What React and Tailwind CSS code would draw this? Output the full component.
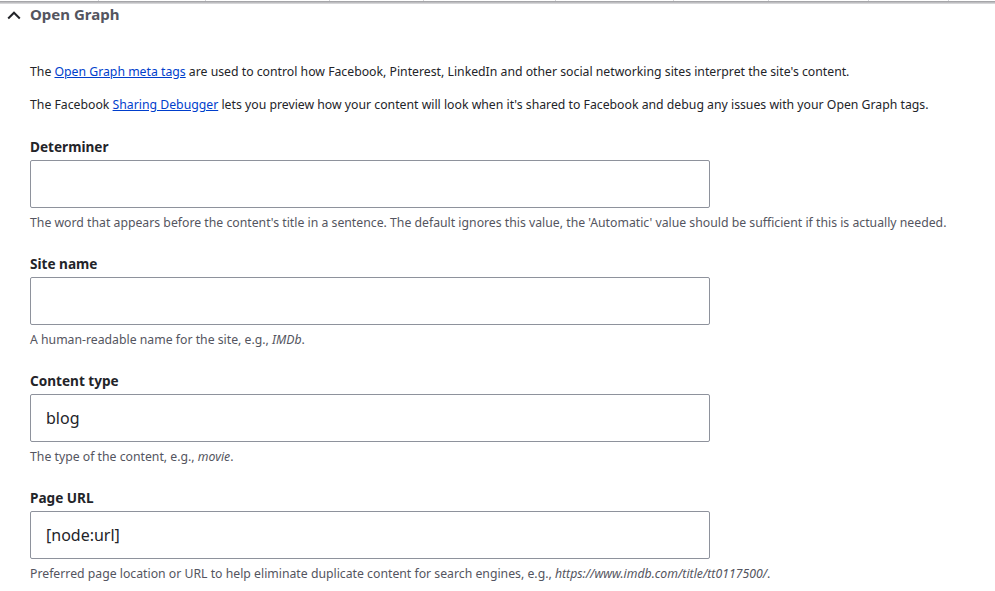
const fields = [
  {
    label: 'Determiner',
    value: '',
    help: (
      <>The word that appears before the content's title in a sentence. The default ignores this value, the 'Automatic' value should be sufficient if this is actually needed.</>
    ),
  },
  {
    label: 'Site name',
    value: '',
    help: (
      <>A human-readable name for the site, e.g., <em>IMDb</em>.</>
    ),
  },
  {
    label: 'Content type',
    value: 'blog',
    help: (
      <>The type of the content, e.g., <em>movie</em>.</>
    ),
  },
  {
    label: 'Page URL',
    value: '[node:url]',
    help: (
      <>Preferred page location or URL to help eliminate duplicate content for search engines, e.g., <em>https://www.imdb.com/title/tt0117500/</em>.</>
    ),
  },
];

const dividers = [98, 205, 329, 423, 555, 673, 768, 868, 948];

const Field = ({ label, value, help }) => (
  <div className="flex flex-col">
    <label className="text-[13.6px] font-bold leading-[18px] text-[#232429]">{label}</label>
    <input
      readOnly
      value={value}
      className="mt-[4px] h-[48px] w-[680px] rounded-[2px] border border-[#8e929c] bg-white px-[15px] text-[16px] text-[#232429] outline-none"
    />
    <p className="mt-[7px] text-[12.25px] leading-[16px] text-[#545560]">{help}</p>
  </div>
);

export default function App() {
  return (
    <div className="h-[591px] w-[995px] overflow-hidden bg-white font-['Noto_Sans',sans-serif]">
      <div className="relative h-[1px] bg-white">
        {dividers.map((x) => (
          <span key={x} className="absolute top-0 h-[1px] w-[1px] bg-[#d4d4d8]" style={{ left: x }} />
        ))}
      </div>
      <div className="h-[3px] bg-gradient-to-b from-[#9a9a9e] to-[#e2e2e4]" />

      <div className="flex items-center gap-[9px] pl-[7px] pt-[1px]">
        <svg width="14" height="14" viewBox="0 0 14 14" fill="none">
          <path d="M1.2 10.5 L7 4.7 L12.8 10.5" stroke="#232429" strokeWidth="2" />
        </svg>
        <h2 className="-mt-[2px] text-[15px] font-bold leading-[22px] text-[#545560]">Open Graph</h2>
      </div>

      <div className="pl-[30px] pt-[39px]">
        <p className="text-[12.25px] leading-[16px] text-[#232429]">
          The <a href="#" className="text-[#003ecc] underline">Open Graph meta tags</a> are used to control how Facebook, Pinterest, LinkedIn and other social networking sites interpret the site's content.
        </p>
        <p className="mt-[17px] text-[12.25px] leading-[16px] text-[#232429]">
          The Facebook <a href="#" className="text-[#003ecc] underline">Sharing Debugger</a> lets you preview how your content will look when it's shared to Facebook and debug any issues with your Open Graph tags.
        </p>

        <div className="mt-[25px] flex flex-col gap-[24px]">
          {fields.map((f) => (
            <Field key={f.label} {...f} />
          ))}
        </div>
      </div>
    </div>
  );
}
